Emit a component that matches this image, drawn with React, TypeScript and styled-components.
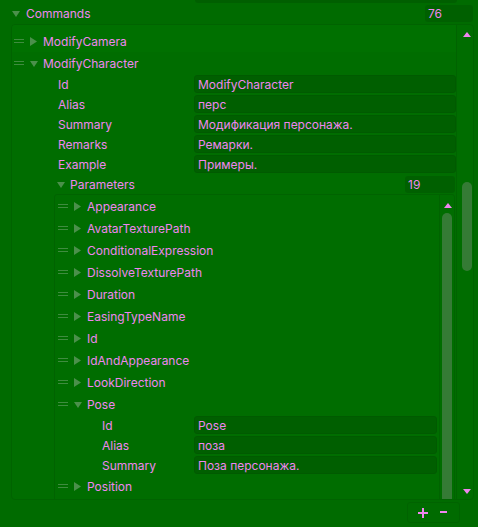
import React from "react";
import styled, { createGlobalStyle } from "styled-components";

const GlobalStyle = createGlobalStyle`
  html, body {
    margin: 0;
    padding: 0;
    background: #006b00;
  }
  body {
    font-family: Inter, "Noto Sans", sans-serif;
    font-size: 12px;
    color: #ef86ef;
  }
  *, *::before, *::after {
    box-sizing: border-box;
  }
`;

const Root = styled.div`
  width: 478px;
  height: 527px;
  display: flex;
  flex-direction: column;
  overflow: hidden;
  background: #006b00;
`;

const TopStub = styled.div`
  height: 3px;
  display: flex;
  padding-left: 195px;
  flex-shrink: 0;
`;

const StubBox = styled.div`
  width: 262px;
  height: 3px;
  background: #005f00;
  border-radius: 0 0 3px 3px;
`;

const Header = styled.div`
  height: 21px;
  display: flex;
  align-items: center;
  padding-left: 12px;
  padding-right: 5px;
  flex-shrink: 0;
`;

const HeaderLabel = styled.span`
  flex: 1;
  margin-left: 1px;
  line-height: 1;
`;

const CountBox = styled.div<{ $w: number }>`
  width: ${(p) => p.$w}px;
  height: 17px;
  background: #006000;
  border-radius: 3px;
  display: flex;
  align-items: center;
  padding-left: 3px;
  font-size: 12px;
`;

const Panel = styled.div`
  margin-left: 11px;
  width: 463px;
  height: 476px;
  border: 1px solid #006300;
  border-radius: 4px;
  background: #006d00;
  display: flex;
  overflow: hidden;
  flex-shrink: 0;
`;

const Content = styled.div`
  flex: 1;
  min-width: 0;
  display: flex;
  flex-direction: column;
  overflow: hidden;
`;

const ScrollCol = styled.div<{ $w: number }>`
  width: ${(p) => p.$w}px;
  flex-shrink: 0;
  position: relative;
  border-left: 1px solid #006300;
`;

const Thumb = styled.div`
  position: absolute;
  width: 10px;
  border-radius: 5px;
  background: #357b35;
`;

const ArrowGlyph = styled.svg`
  position: absolute;
  display: block;
`;

const ItemRow = styled.div<{ $pad: number; $top?: number; $hl?: boolean }>`
  height: ${(p) => 22 + (p.$top ?? 0)}px;
  padding-top: ${(p) => p.$top ?? 0}px;
  display: flex;
  align-items: center;
  padding-left: ${(p) => p.$pad}px;
  flex-shrink: 0;
  background: ${(p) => (p.$hl ? "#007000" : "transparent")};
`;

const Handle = styled.svg`
  width: 10px;
  height: 5px;
  margin-right: 6px;
  flex-shrink: 0;
`;

const Toggle = styled.svg`
  width: 8px;
  height: 9px;
  margin-right: 5px;
  flex-shrink: 0;
`;

const ItemName = styled.span`
  line-height: 1;
  white-space: nowrap;
  padding-top: 1px;
`;

const PropRow = styled.div<{ $pad: number; $label: number; $right: number }>`
  height: 20px;
  display: grid;
  grid-template-columns: ${(p) => p.$label}px 1fr;
  align-items: center;
  padding-left: ${(p) => p.$pad}px;
  padding-right: ${(p) => p.$right}px;
  flex-shrink: 0;
`;

const PropLabel = styled.span`
  line-height: 1;
  white-space: nowrap;
  padding-top: 1px;
`;

const Field = styled.div`
  height: 18px;
  background: #005f00;
  border: 1px solid #005a00;
  border-radius: 3px;
  display: flex;
  align-items: center;
  padding-left: 3px;
  padding-top: 1px;
  white-space: nowrap;
  overflow: hidden;
`;

const GroupRow = styled.div`
  height: 20px;
  display: flex;
  align-items: center;
  padding-left: 45px;
  padding-right: 1px;
  flex-shrink: 0;
`;

const GroupLabel = styled.span`
  flex: 1;
  line-height: 1;
  padding-top: 1px;
`;

const InnerPanel = styled.div`
  margin-left: 42px;
  margin-right: 1px;
  height: 330px;
  flex-shrink: 0;
  border: 1px solid #006300;
  border-radius: 3px;
  display: flex;
  overflow: hidden;
`;

const InnerContent = styled.div`
  flex: 1;
  min-width: 0;
  display: flex;
  flex-direction: column;
`;

const Footer = styled.div`
  flex: 1;
  display: flex;
  align-items: flex-start;
  padding-top: 2px;
  padding-left: 407px;
`;

const ButtonBox = styled.div`
  width: 53px;
  height: 21px;
  border: 1px solid #006300;
  border-radius: 3px;
  display: flex;
  align-items: center;
  padding-left: 10px;
  gap: 12px;
`;

const IconButton = styled.svg`
  display: block;
`;

const TRI = "#4b904b";
const PINK = "#ef86ef";

const Grip = () => (
  <Handle viewBox="0 0 10 5">
    <rect x="0" y="0" width="10" height="1" fill="#3f8c3f" />
    <rect x="0" y="3" width="10" height="1" fill="#3f8c3f" />
  </Handle>
);

const Caret = ({ open }: { open?: boolean }) =>
  open ? (
    <Toggle viewBox="0 0 8 9">
      <polygon points="0,2 8,2 4,8" fill={TRI} />
    </Toggle>
  ) : (
    <Toggle viewBox="0 0 8 9">
      <polygon points="0,0 7,4.5 0,9" fill={TRI} />
    </Toggle>
  );

const UpArrow = ({ x, y }: { x: number; y: number }) => (
  <ArrowGlyph width="8" height="5" viewBox="0 0 8 5" style={{ left: x, top: y }}>
    <polygon points="0,5 4,0 8,5" fill={PINK} />
  </ArrowGlyph>
);

const DownArrow = ({ x, y }: { x: number; y: number }) => (
  <ArrowGlyph width="8" height="5" viewBox="0 0 8 5" style={{ left: x, top: y }}>
    <polygon points="0,0 8,0 4,5" fill={PINK} />
  </ArrowGlyph>
);

const commandProps: [string, string][] = [
  ["Id", "ModifyCharacter"],
  ["Alias", "перс"],
  ["Summary", "Модификация персонажа."],
  ["Remarks", "Ремарки."],
  ["Example", "Примеры."],
];

const paramsBefore = [
  "Appearance",
  "AvatarTexturePath",
  "ConditionalExpression",
  "DissolveTexturePath",
  "Duration",
  "EasingTypeName",
  "Id",
  "IdAndAppearance",
  "LookDirection",
];

const poseProps: [string, string][] = [
  ["Id", "Pose"],
  ["Alias", "поза"],
  ["Summary", "Поза персонажа."],
];

export default function App() {
  return (
    <Root>
      <GlobalStyle />
      <TopStub>
        <StubBox />
      </TopStub>
      <Header>
        <Caret open />
        <HeaderLabel>Commands</HeaderLabel>
        <CountBox $w={48}>76</CountBox>
      </Header>

      <Panel>
        <Content>
          <ItemRow $pad={2} $top={5} $hl>
            <Grip />
            <Caret />
            <ItemName>ModifyCamera</ItemName>
          </ItemRow>
          <ItemRow $pad={2}>
            <Grip />
            <Caret open />
            <ItemName>ModifyCharacter</ItemName>
          </ItemRow>

          {commandProps.map(([k, v]) => (
            <PropRow key={k} $pad={46} $label={136} $right={0}>
              <PropLabel>{k}</PropLabel>
              <Field>{v}</Field>
            </PropRow>
          ))}

          <GroupRow>
            <Caret open />
            <GroupLabel>Parameters</GroupLabel>
            <CountBox $w={50}>19</CountBox>
          </GroupRow>

          <InnerPanel>
            <InnerContent>
              {paramsBefore.map((name) => (
                <ItemRow key={name} $pad={3}>
                  <Grip />
                  <Caret />
                  <ItemName>{name}</ItemName>
                </ItemRow>
              ))}
              <ItemRow $pad={3}>
                <Grip />
                <Caret open />
                <ItemName>Pose</ItemName>
              </ItemRow>
              {poseProps.map(([k, v]) => (
                <PropRow key={k} $pad={47} $label={92} $right={2}>
                  <PropLabel>{k}</PropLabel>
                  <Field>{v}</Field>
                </PropRow>
              ))}
              <ItemRow $pad={3}>
                <Grip />
                <Caret />
                <ItemName>Position</ItemName>
              </ItemRow>
            </InnerContent>
            <ScrollCol $w={15}>
              <UpArrow x={4} y={8} />
              <Thumb style={{ left: 2, top: 18, height: 300 }} />
            </ScrollCol>
          </InnerPanel>
        </Content>
        <ScrollCol $w={17}>
          <UpArrow x={6} y={7} />
          <Thumb style={{ left: 5, top: 157, height: 89 }} />
          <DownArrow x={6} y={464} />
        </ScrollCol>
      </Panel>

      <Footer>
        <ButtonBox>
          <IconButton width="10" height="10" viewBox="0 0 10 10">
            <rect x="4" y="0" width="2" height="10" fill={PINK} />
            <rect x="0" y="4" width="10" height="2" fill={PINK} />
          </IconButton>
          <IconButton width="7" height="3" viewBox="0 0 7 3">
            <rect x="0" y="0" width="7" height="2" fill={PINK} />
          </IconButton>
        </ButtonBox>
      </Footer>
    </Root>
  );
}
